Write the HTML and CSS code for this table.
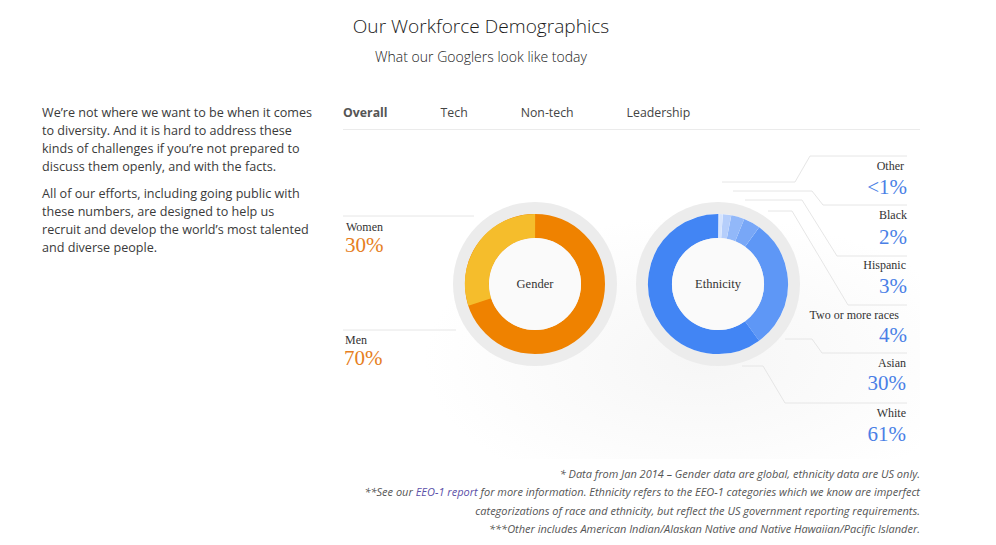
FILE: index.html
```html
<!DOCTYPE html>
<html lang="en">
<head>
<meta charset="utf-8">
<title>Our Workforce Demographics</title>
<link rel="stylesheet" href="styles.css">
</head>
<body>
<div class="page">
  <header class="head">
    <h1 class="title">Our Workforce Demographics</h1>
    <p class="subtitle">What our Googlers look like today</p>
  </header>
  <div class="main">
    <div class="intro">
      <p>We’re not where we want to be when it comes to diversity. And it is hard to address these kinds of challenges if you’re not prepared to discuss them openly, and with the facts.</p>
      <p>All of our efforts, including going public with these numbers, are designed to help us recruit and develop the world’s most talented and diverse people.</p>
    </div>
    <div class="panel">
      <nav class="tabs">
        <span class="tab active">Overall</span>
        <span class="tab">Tech</span>
        <span class="tab">Non-tech</span>
        <span class="tab">Leadership</span>
      </nav>
      <div class="chart">
        <svg class="chart-svg" width="577" height="329" viewBox="0 0 577 329">
          <g class="leaders">
            <polyline points="0,86 131,86"/>
            <polyline points="0,200 113,200"/>
            <polyline points="379,52 452,52 467,26 564,26"/>
            <polyline points="390,61 469,61 480,75 564,75"/>
            <polyline points="402,70 459,70 494,126 564,126"/>
            <polyline points="425,81 449,81 505,175 564,175"/>
            <polyline points="442,209 469,209 479,223 564,223"/>
            <polyline points="399,236 420,236 442,273 564,273"/>
          </g>
          <!-- Gender donut -->
          <circle cx="192" cy="154" r="82" class="halo"/>
          <circle cx="192" cy="154" r="58" class="ring" stroke="#ef8200"/>
          <circle cx="192" cy="154" r="58" class="ring" stroke="#f5bd2c" stroke-dasharray="109.33 400" transform="rotate(162 192 154)"/>
          <circle cx="192" cy="154" r="46" class="hole"/>
          <text x="192" y="154" class="center">Gender</text>
          <!-- Ethnicity donut -->
          <circle cx="375" cy="154" r="82" class="halo"/>
          <circle cx="375" cy="154" r="58" class="ring" stroke="#ffffff"/>
          <circle cx="375" cy="154" r="58" class="ring" stroke="#4285f4" stroke-dasharray="218.65 400" transform="rotate(54 375 154)"/>
          <circle cx="375" cy="154" r="58" class="ring" stroke="#5e97f6" stroke-dasharray="109.33 400" transform="rotate(-54 375 154)"/>
          <circle cx="375" cy="154" r="58" class="ring" stroke="#78a7f7" stroke-dasharray="14.17 400" transform="rotate(-68 375 154)"/>
          <circle cx="375" cy="154" r="58" class="ring" stroke="#92b8f9" stroke-dasharray="11.13 400" transform="rotate(-79 375 154)"/>
          <circle cx="375" cy="154" r="58" class="ring" stroke="#b5cefb" stroke-dasharray="7.09 400" transform="rotate(-86 375 154)"/>
          <circle cx="375" cy="154" r="58" class="ring" stroke="#d6e4fd" stroke-dasharray="3.04 400" transform="rotate(-89 375 154)"/>
          <circle cx="375" cy="154" r="46" class="hole"/>
          <text x="375" y="154" class="center">Ethnicity</text>
          <!-- Gender labels -->
          <text x="3" y="97" class="name">Women</text>
          <text x="2" y="115" class="pct orange">30%</text>
          <text x="2" y="210" class="name">Men</text>
          <text x="1" y="228" class="pct orange">70%</text>
          <!-- Ethnicity labels -->
          <g class="right">
            <text x="561" y="36" class="name">Other</text>
            <text x="564" y="57" class="pct blue">&lt;1%</text>
            <text x="564" y="85" class="name">Black</text>
            <text x="564" y="107" class="pct blue">2%</text>
            <text x="563" y="135" class="name">Hispanic</text>
            <text x="564" y="156" class="pct blue">3%</text>
            <text x="556" y="185" class="name">Two or more races</text>
            <text x="564" y="205" class="pct blue">4%</text>
            <text x="563" y="233" class="name">Asian</text>
            <text x="563" y="253" class="pct blue">30%</text>
            <text x="563" y="283" class="name">White</text>
            <text x="563" y="304" class="pct blue">61%</text>
          </g>
        </svg>
      </div>
    </div>
  </div>
  <footer class="notes">
    <p>* Data from Jan 2014 – Gender data are global, ethnicity data are US only.</p>
    <p>**See our <a href="#" class="link">EEO-1 report</a> for more information. Ethnicity refers to the EEO-1 categories which we know are imperfect categorizations of race and ethnicity, but reflect the US government reporting requirements.</p>
    <p>***Other includes American Indian/Alaskan Native and Native Hawaiian/Pacific Islander.</p>
  </footer>
</div>
</body>
</html>
```
FILE: styles.css
```css
html, body {
  margin: 0;
  padding: 0;
  background: #ffffff;
}
body {
  font-family: "Open Sans", "Liberation Sans", sans-serif;
  color: #333333;
}
.page {
  width: 878px;
  margin-left: 42px;
}
.head {
  text-align: center;
  padding-top: 13px;
}
.title {
  margin: 0;
  font-size: 19.1px;
  line-height: 26px;
  font-weight: 300;
  color: #1a1a1a;
}
.subtitle {
  margin: 8px 0 0;
  font-size: 14px;
  line-height: 20px;
  font-weight: 300;
  color: #222222;
}
.main {
  display: flex;
  gap: 30px;
  margin-top: 37px;
}
.intro {
  width: 271px;
  flex: none;
}
.intro p {
  margin: 0 0 9px;
  font-size: 12.6px;
  line-height: 18px;
  color: #3a3a3a;
}
.panel {
  width: 577px;
  flex: none;
}
.tabs {
  display: flex;
  gap: 53px;
  padding-bottom: 7px;
  border-bottom: 1px solid #ebebeb;
  font-size: 12.3px;
  line-height: 18px;
  color: #444444;
}
.tab.active {
  font-weight: 700;
  color: #555555;
}
.chart {
  height: 329px;
  background: radial-gradient(ellipse 60% 55% at 62% 70%, #f6f6f6 0%, #fbfbfb 45%, #ffffff 80%);
}
.chart-svg {
  display: block;
}
.leaders polyline {
  fill: none;
  stroke: #e6e6e6;
  stroke-width: 1;
}
.halo {
  fill: #ececec;
}
.ring {
  fill: none;
  stroke-width: 24;
}
.hole {
  fill: #fafafa;
}
.center {
  font-family: "Liberation Serif", "Times New Roman", serif;
  font-size: 12.5px;
  fill: #333333;
  text-anchor: middle;
  dominant-baseline: central;
}
.name {
  font-family: "Liberation Serif", "Times New Roman", serif;
  font-size: 12px;
  fill: #333333;
  dominant-baseline: central;
}
.pct {
  font-family: "Liberation Serif", "Times New Roman", serif;
  font-size: 21px;
  dominant-baseline: central;
}
.orange {
  fill: #e67e22;
}
.blue {
  fill: #4a7fe6;
}
.right text {
  text-anchor: end;
}
.notes {
  text-align: right;
  margin-top: 6px;
  padding-left: 300px;
}
.notes p {
  margin: 0;
  font-size: 11px;
  line-height: 18.3px;
  font-style: italic;
  color: #555555;
}
.link {
  color: #5b4fa8;
  text-decoration: none;
}
```
